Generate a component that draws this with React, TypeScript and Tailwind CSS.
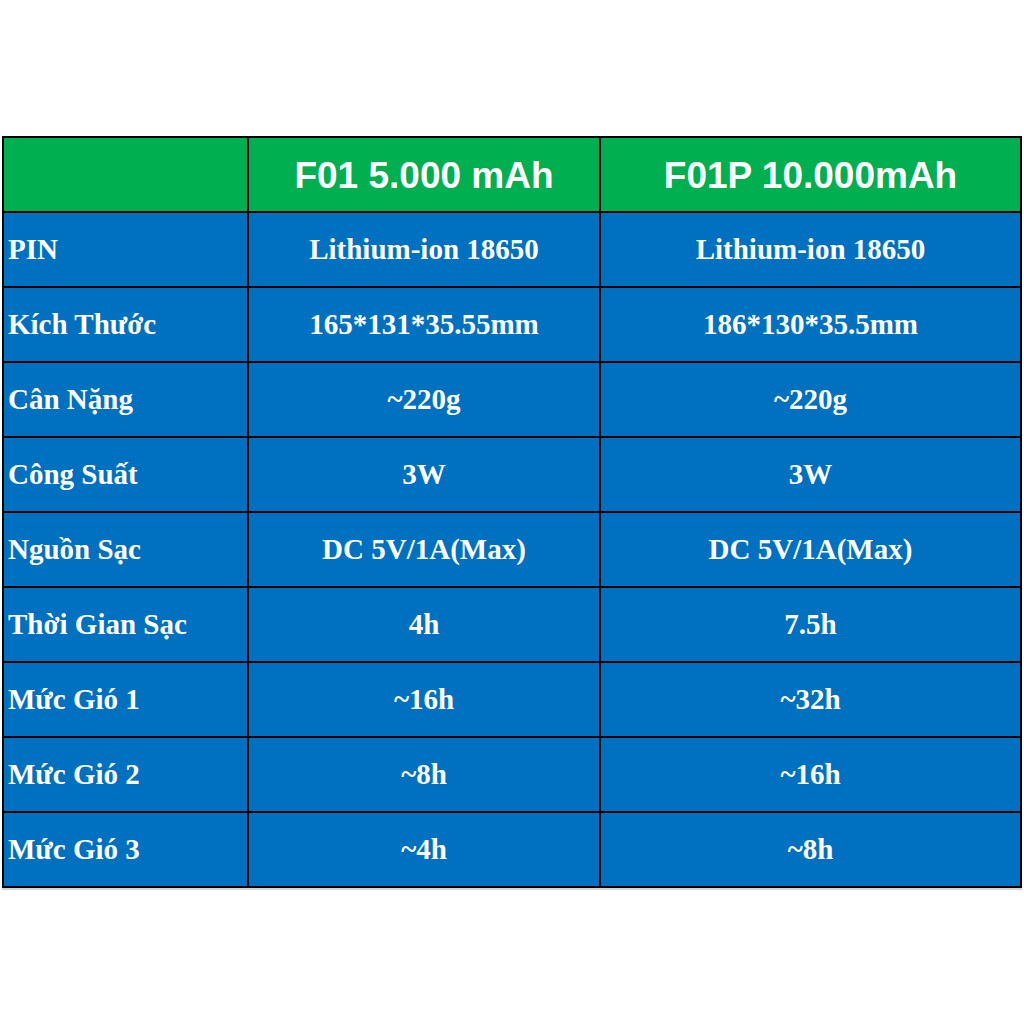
import React from "react";

const rows: [string, string, string][] = [
  ["PIN", "Lithium-ion 18650", "Lithium-ion 18650"],
  ["Kích Thước", "165*131*35.55mm", "186*130*35.5mm"],
  ["Cân Nặng", "~220g", "~220g"],
  ["Công Suất", "3W", "3W"],
  ["Nguồn Sạc", "DC 5V/1A(Max)", "DC 5V/1A(Max)"],
  ["Thời Gian Sạc", "4h", "7.5h"],
  ["Mức Gió 1", "~16h", "~32h"],
  ["Mức Gió 2", "~8h", "~16h"],
  ["Mức Gió 3", "~4h", "~8h"],
];

export default function App() {
  return (
    <div className="w-[1024px] h-[1024px] bg-white pt-[136px] pl-[2px]">
      <div className="w-[1020px] grid grid-cols-[243px_350px_419px] auto-rows-[73px] gap-[2px] p-[2px] bg-black shadow-[0_2px_0_#d4d4d4]">
        <div className="bg-[#00af50]" />
        <div className="bg-[#00af50] flex items-center justify-center pt-[3px] text-white font-bold text-[37px] [font-family:'Liberation_Sans',Arial,sans-serif]">
          F01 5.000 mAh
        </div>
        <div className="bg-[#00af50] flex items-center justify-center pt-[3px] text-white font-bold text-[37px] [font-family:'Liberation_Sans',Arial,sans-serif]">
          F01P 10.000mAh
        </div>
        {rows.map((r, i) => (
          <React.Fragment key={i}>
            <div className="bg-[#0070c0] flex items-center pl-[4px] pt-[1px] text-white font-bold text-[29px] [font-family:'Liberation_Serif','Times_New_Roman',serif]">
              {r[0]}
            </div>
            <div className="bg-[#0070c0] flex items-center justify-center pt-[1px] text-white font-bold text-[29px] [font-family:'Liberation_Serif','Times_New_Roman',serif]">
              {r[1]}
            </div>
            <div className="bg-[#0070c0] flex items-center justify-center pt-[1px] text-white font-bold text-[29px] [font-family:'Liberation_Serif','Times_New_Roman',serif]">
              {r[2]}
            </div>
          </React.Fragment>
        ))}
      </div>
    </div>
  );
}
